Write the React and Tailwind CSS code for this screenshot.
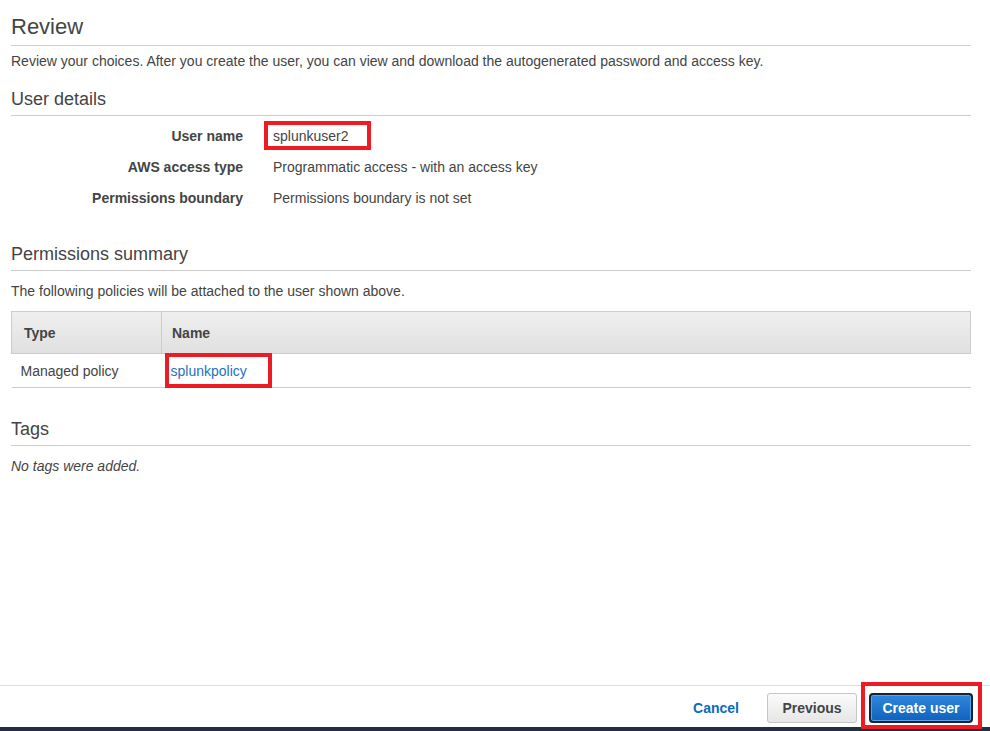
export default function App() {
  const font = { fontFamily: '"Liberation Sans", Arial, sans-serif' };
  return (
    <div
      className="h-[731px] w-[990px] flex flex-col bg-white text-[#444] text-[14px] leading-[20px] overflow-hidden"
      style={font}
    >
      <div className="flex-1 pl-[11px] pr-[19px] pt-[14px]">
        <h2 className="text-[22px] leading-[26px] pb-[5px] border-b border-[#cccccc] text-[#444]">Review</h2>
        <p className="mt-[5px]">
          Review your choices. After you create the user, you can view and download the autogenerated password and access key.
        </p>

        <h3 className="mt-[17px] text-[18px] leading-[22px] pb-[5px] border-b border-[#cccccc]">User details</h3>
        <div className="mt-[4px] flex flex-col">
          <div className="flex h-[31px] items-center">
            <div className="w-[232px] text-right font-bold">User name</div>
            <div className="ml-[30px]">
              <span className="relative inline-block">
                splunkuser2
                <span className="absolute left-[-9px] top-[-5px] w-[107px] h-[29px] border-[4px] border-[#ed1c24]" />
              </span>
            </div>
          </div>
          <div className="flex h-[31px] items-center">
            <div className="w-[232px] text-right font-bold">AWS access type</div>
            <div className="ml-[30px]">Programmatic access - with an access key</div>
          </div>
          <div className="flex h-[31px] items-center">
            <div className="w-[232px] text-right font-bold">Permissions boundary</div>
            <div className="ml-[30px]">Permissions boundary is not set</div>
          </div>
        </div>

        <h3 className="mt-[30px] text-[18px] leading-[22px] pb-[5px] border-b border-[#cccccc]">Permissions summary</h3>
        <p className="mt-[10px]">The following policies will be attached to the user shown above.</p>

        <table className="mt-[10px] w-full border-collapse">
          <thead>
            <tr className="h-[42px] bg-gradient-to-b from-[#efefef] to-[#e0e0e0]">
              <th className="w-[150px] text-left font-bold pl-[12px] border border-[#cccccc]">Type</th>
              <th className="text-left font-bold pl-[10px] border border-[#cccccc]">Name</th>
            </tr>
          </thead>
          <tbody>
            <tr className="h-[34px] border-b border-[#cccccc]">
              <td className="pl-[9px]">Managed policy</td>
              <td className="pl-[9px]">
                <span className="relative inline-block text-[#1f6fc5]">
                  splunkpolicy
                  <span className="absolute left-[-6px] top-[-8px] w-[107px] h-[35px] border-[4px] border-[#ed1c24]" />
                </span>
              </td>
            </tr>
          </tbody>
        </table>

        <h3 className="mt-[30px] text-[18px] leading-[22px] pb-[5px] border-b border-[#cccccc]">Tags</h3>
        <p className="mt-[10px] italic">No tags were added.</p>
      </div>

      <div className="border-t border-[#dddddd]">
        <div className="h-[41px] flex items-start justify-end pt-[7px] pr-[17px]">
          <span className="mt-[5px] font-bold text-[#0b6bbf] mr-[28px]">Cancel</span>
          <button
            className="h-[30px] w-[90px] rounded-[3px] border border-[#c6c6c6] bg-gradient-to-b from-[#fbfbfb] to-[#e6e6e6] font-bold text-[#444] text-[14px]"
            style={font}
          >
            Previous
          </button>
          <span className="relative ml-[12px] inline-block">
            <button
              className="h-[30px] w-[104px] rounded-[4px] border-2 border-[#13243a] bg-gradient-to-b from-[#2f87dc] to-[#0f62bd] font-bold text-white text-[14px] shadow-[inset_0_0_0_1px_#5da2e6]"
              style={font}
            >
              Create user
            </button>
            <span className="absolute left-[-8px] top-[-11px] w-[121px] h-[47px] border-[4px] border-[#ed1c24]" />
          </span>
        </div>
        <div className="h-[4px] bg-[#232f3e]" />
      </div>
    </div>
  );
}
